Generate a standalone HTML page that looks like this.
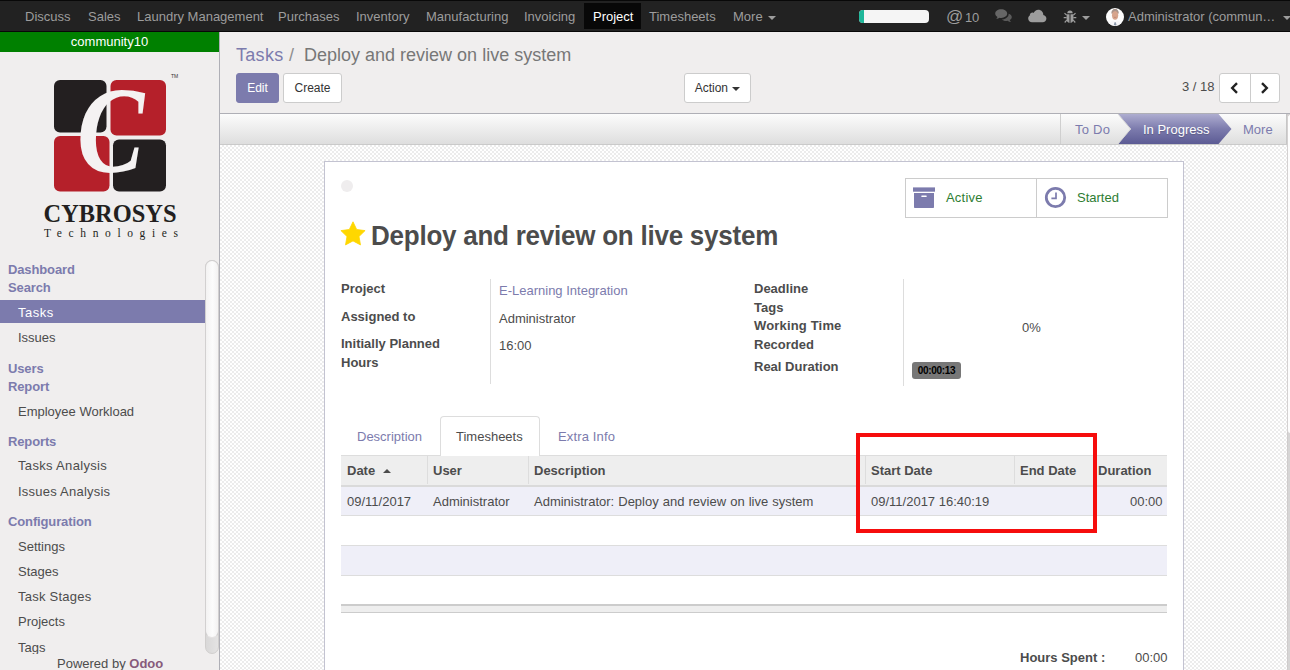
<!DOCTYPE html>
<html>
<head>
<meta charset="utf-8">
<title>Deploy and review on live system - Odoo</title>
<style>
*{box-sizing:border-box;margin:0;padding:0}
html,body{width:1290px;height:670px;overflow:hidden;background:#f0eeee;font-family:"Liberation Sans",sans-serif;font-size:13px;color:#4c4c4c}
body{position:relative}
.abs{position:absolute;white-space:nowrap}
/* navbar */
#nav{position:absolute;left:0;top:0;width:1290px;height:32px;background:#222222;border-top:1px solid #080808;border-bottom:1px solid #080808}
#nav .mi{position:absolute;top:0;height:30px;line-height:31px;color:#9d9d9d;font-size:13px;white-space:nowrap}
#nav .act{background:#080808;color:#fff;padding:0 9px}
.caret{display:inline-block;width:0;height:0;border-left:4px solid transparent;border-right:4px solid transparent;border-top:4px solid currentColor;vertical-align:middle;margin-left:4px}
/* sidebar */
#side{position:absolute;left:0;top:32px;width:220px;height:638px;background:#f0eeee;border-right:1px solid #afafb6}
#db{position:absolute;left:0;top:0;width:219px;height:20px;background:#008000;color:#fff;text-align:center;font-size:13px;line-height:19px}
.mh{position:absolute;left:8px;font-weight:bold;color:#7c7bad;font-size:13px;white-space:nowrap;letter-spacing:-0.13px}
.ml{position:absolute;left:18px;color:#4c4c4c;font-size:13px;white-space:nowrap}
#selrow{position:absolute;left:0;top:268px;width:205px;height:23px;background:#7c7bad}
/* control panel */
#cp{position:absolute;left:220px;top:32px;width:1070px;height:82px;background:#f0eeee;border-bottom:1px solid #afafb6}
.btn{position:absolute;height:29px;line-height:29px;border:1px solid #ccc;border-radius:3px;background:#fff;color:#333;font-size:12px;text-align:center;white-space:nowrap}
.btn.pri{background:#7c7bad;border-color:#7c7bad;color:#fff}
/* statusbar */
#sb{position:absolute;left:220px;top:114px;width:1067px;height:31px;background:linear-gradient(#fcfcfc,#dedede);border-bottom:1px solid #cacaca}
/* sheet bg */
#bg{position:absolute;left:220px;top:145px;width:1067px;height:525px;background-color:#fff;
background-image:conic-gradient(#ececec 25%,#fff 0 50%,#ececec 0 75%,#fff 0);background-size:4px 4px}
#sheet{position:absolute;left:324px;top:161px;width:860px;height:520px;background:#fff;border:1px solid #c3c3d1}
#sheet>*{margin-top:1px}
.lbl{position:absolute;font-weight:bold;color:#4c4c4c;font-size:13px;white-space:nowrap}
.val{position:absolute;color:#4c4c4c;font-size:13px;white-space:nowrap}
</style>
</head>
<body>
<div id="nav">
  <span class="mi" style="left:25px">Discuss</span>
  <span class="mi" style="left:88px">Sales</span>
  <span class="mi" style="left:137px">Laundry Management</span>
  <span class="mi" style="left:278px">Purchases</span>
  <span class="mi" style="left:356px">Inventory</span>
  <span class="mi" style="left:426px">Manufacturing</span>
  <span class="mi" style="left:524px">Invoicing</span>
  <div style="position:absolute;left:584px;top:2px;width:57px;height:26px;background:#080808"></div>
  <span class="mi" style="left:593px;color:#fff">Project</span>
  <span class="mi" style="left:649px">Timesheets</span>
  <span class="mi" style="left:733px">More <i class="caret" style="margin-left:2px"></i></span>
  <div style="position:absolute;left:859px;top:9px;width:70px;height:13px;border-radius:4px;background:#f5f5f5;overflow:hidden"><div style="width:5px;height:13px;background:#1fb79a"></div></div>
  <span class="mi" style="left:946px"><span style="font-size:17px;position:relative;top:0px;margin-right:-2px">@</span> 10</span>
  <svg style="position:absolute;left:995px;top:8px" width="17" height="14" viewBox="0 0 17 14"><path d="M6.2 0.3C2.8 0.3 0.2 2.2 0.2 4.6c0 1.4 0.9 2.6 2.3 3.4-0.2 0.8-0.7 1.5-1.3 2 1.3-0.1 2.5-0.6 3.4-1.3 0.5 0.1 1 0.2 1.6 0.2 3.4 0 6-1.9 6-4.3S9.600 0.300 6.200 0.300z" fill="#666"/><path d="M13.6 5.200c0 2.800-3 5.100-6.900 5.300 1 0.900 2.600 1.500 4.300 1.500 0.600 0 1.100-0.100 1.600-0.200 0.900 0.700 2.100 1.200 3.400 1.300-0.600-0.500-1.100-1.200-1.300-2 1.300-0.700 2.100-1.800 2.100-3 0-1.500-1.300-2.800-3.200-3.400z" fill="#5a5a5a"/></svg>
  <svg style="position:absolute;left:1028px;top:8px" width="19" height="14" viewBox="0 0 19 14"><path d="M15.300 6.100c0-0.100 0-0.300 0-0.400 0-2.700-2.200-5-5-5-2.100 0-3.900 1.300-4.600 3.200C5.300 3.700 4.900 3.600 4.500 3.600c-1.500 0-2.700 1.200-2.700 2.700 0 0.100 0 0.200 0 0.300C0.800 7.100 0.200 8.200 0.200 9.400c0 2.100 1.700 3.800 3.800 3.800h10.600c2.100 0 3.800-1.700 3.800-3.800 0-1.600-1.300-3-3.100-3.300z" fill="#9d9d9d"/></svg>
  <svg style="position:absolute;left:1063px;top:9px" width="14" height="14" viewBox="0 0 14 14"><g fill="#9d9d9d"><path d="M4.300 3.300a2.700 2.700 0 0 1 5.400 0z"/><path d="M3.600 4.300h2.900v8.600c-1.700-0.200-2.900-1.700-2.900-3.500z"/><path d="M7.500 4.300h2.900v5.100c0 1.800-1.200 3.300-2.900 3.500z"/></g><g stroke="#9d9d9d" stroke-width="1.200" fill="none"><path d="M0.700 7.600h2.900M10.400 7.600h2.900M3.600 5.200L1.500 3.100M10.400 5.200l2.100-2.100M3.800 10.200l-2.100 2.300M10.200 10.200l2.100 2.300"/></g></svg>
  <i class="caret" style="position:absolute;left:1082px;top:15px;margin:0;color:#9d9d9d"></i>
  <svg style="position:absolute;left:1106px;top:7px" width="18" height="18" viewBox="0 0 18 18"><defs><clipPath id="av"><circle cx="9" cy="9" r="9"/></clipPath></defs><g clip-path="url(#av)"><rect width="18" height="18" fill="#fcfcfc"/><path d="M5.300 5.600c0-3 1.600-4.600 3.800-4.600s3.700 1.600 3.700 4.600z" fill="#a8948a"/><ellipse cx="9.100" cy="7.300" rx="3.100" ry="4.400" fill="#d7a58d"/><path d="M6 5.600c0.400-1.900 1.600-2.600 3.100-2.600s2.600 0.700 3 2.600c0-3-1.200-4.500-3-4.500s-3.100 1.500-3.100 4.500z" fill="#a8958c"/><path d="M7.700 8.600c0.500 0.500 2.300 0.500 2.800 0l-0.300 1.500H8z" fill="#c48f79"/><path d="M3 18c0-3.200 2-4.900 4.300-5.500l1.800 1.300 1.800-1.300C13.200 13.100 15.200 14.800 15.200 18z" fill="#f6f6f8"/><path d="M8.500 14.200h1.300l0.500 2-1.150 1.800-1.150-1.800z" fill="#8d9aac"/></g></svg>
  <span class="mi" style="left:1128px">Administrator (commun&#8230;</span>
  <i class="caret" style="position:absolute;left:1283px;top:15px;margin:0;color:#9d9d9d"></i>
</div>
<div id="side">
  <div id="db">community10</div>
  <svg style="position:absolute;left:40px;top:36px" width="150" height="176" viewBox="40 68 150 176">
    <rect x="54" y="80" width="52.500" height="52.500" rx="6" fill="#231f20"/>
    <rect x="110.500" y="80" width="55.500" height="55.500" rx="6" fill="#b5202a"/>
    <rect x="54" y="136" width="55.500" height="55.500" rx="6" fill="#b5202a"/>
    <rect x="113" y="139.500" width="53" height="52" rx="6" fill="#231f20"/>
    <text x="0" y="0" transform="translate(76.900,171.600) scale(0.900,1.098)" font-family="Liberation Serif, serif" font-style="italic" font-weight="bold" font-size="112" fill="#f4f2f2">C</text>
    <text x="171" y="78" font-family="Liberation Sans, sans-serif" font-size="5" fill="#333">TM</text>
    <text x="43.500" y="221.500" font-family="Liberation Serif, serif" font-weight="bold" font-size="24.500" fill="#231f20" textLength="133" lengthAdjust="spacingAndGlyphs">CYBROSYS</text>
    <text x="44" y="237" font-family="Liberation Serif, serif" font-size="11.500" fill="#231f20" textLength="134" lengthAdjust="spacing">Technologies</text>
  </svg>
  <div class="mh" style="top:230px">Dashboard</div>
  <div class="mh" style="top:248px">Search</div>
  <div id="selrow"></div>
  <div class="ml" style="top:273px;color:#fff;letter-spacing:0.5px">Tasks</div>
  <div class="ml" style="top:298px">Issues</div>
  <div class="mh" style="top:329px">Users</div>
  <div class="mh" style="top:347px">Report</div>
  <div class="ml" style="top:372px">Employee Workload</div>
  <div class="mh" style="top:402px">Reports</div>
  <div class="ml" style="top:426px;letter-spacing:0.33px">Tasks Analysis</div>
  <div class="ml" style="top:452px;letter-spacing:0.23px">Issues Analysis</div>
  <div class="mh" style="top:482px">Configuration</div>
  <div class="ml" style="top:507px">Settings</div>
  <div class="ml" style="top:532px">Stages</div>
  <div class="ml" style="top:557px;letter-spacing:0.24px">Task Stages</div>
  <div class="ml" style="top:582px">Projects</div>
  <div class="ml" style="top:608px">Tags</div>
  <div style="position:absolute;left:0;top:622px;width:205px;height:16px;background:#f0eeee"></div>
  <div class="abs" style="left:57px;top:624px;font-size:13px;color:#4c4c4c">Powered by <b style="color:#875a7b">Odoo</b></div>
  <div style="position:absolute;left:205px;top:228px;width:14px;height:394px;border:1px solid #d0cecd;border-radius:7px;background:linear-gradient(90deg,#d9d8d8,#e4e3e3)"></div>
  <div style="position:absolute;left:205px;top:228px;width:14px;height:378px;border:1px solid #d2d0d0;border-bottom-color:#e6e4e4;border-radius:7px;background:linear-gradient(90deg,#f3f2f2,#fcfcfc 55%,#f3f2f2)"></div>
</div>
<div id="cp">
  <div class="abs" style="left:16px;top:13px;font-size:18px;color:#777"><span style="color:#7c7bad;letter-spacing:0.3px">Tasks</span><span style="color:#8f8f8f;margin-left:5.500px">/</span>&nbsp; Deploy and review on live system</div>
  <div class="btn pri" style="left:16px;top:41px;width:43px;height:30px">Edit</div>
  <div class="btn" style="left:63px;top:41px;width:59px;height:30px">Create</div>
  <div class="btn" style="left:464px;top:41px;width:67px;height:30px">Action <i class="caret" style="margin-left:1px"></i></div>
  <div class="abs" style="left:962px;top:47px;font-size:13px;color:#4c4c4c">3 / 18</div>
  <div class="btn" style="left:999px;top:41px;width:32px;height:30px;border-radius:3px 0 0 3px"><svg width="9" height="12" viewBox="0 0 9 12" style="position:absolute;left:10px;top:8px"><path d="M7 1.200L2.200 6 7 10.800" fill="none" stroke="#222" stroke-width="2.400"/></svg></div>
  <div class="btn" style="left:1030px;top:41px;width:30px;height:30px;border-radius:0 3px 3px 0"><svg width="9" height="12" viewBox="0 0 9 12" style="position:absolute;left:9px;top:8px"><path d="M2 1.200L6.800 6 2 10.800" fill="none" stroke="#222" stroke-width="2.400"/></svg></div>
</div>
<div id="sb">
  <div style="position:absolute;left:840px;top:0;width:1px;height:30px;background:#cfcfcf"></div>
  <svg style="position:absolute;left:841px;top:0" width="223" height="30" viewBox="0 0 223 30">
    <defs><linearGradient id="pg" x1="0" y1="0" x2="0" y2="1"><stop offset="0" stop-color="#aeadd0"/><stop offset="0.500" stop-color="#7c7bad"/><stop offset="1" stop-color="#5c5b94"/></linearGradient>
    <linearGradient id="gg" x1="0" y1="0" x2="0" y2="1"><stop offset="0" stop-color="#fcfcfc"/><stop offset="1" stop-color="#dedede"/></linearGradient></defs>
    <path d="M57 0H157.500L170.500 15 157.500 30H57L70 15z" fill="url(#pg)"/>
    <path d="M57 0L69.500 15 57 30" fill="none" stroke="#d4d4d4" stroke-width="1"/>
  </svg>
  <div class="abs" style="left:855px;top:8px;font-size:13px;color:#7c7bad;letter-spacing:0.25px">To Do</div>
  <div class="abs" style="left:923px;top:8px;font-size:13px;color:#fff;text-shadow:0 1px 1px rgba(0,0,0,.2)">In Progress</div>
  <div class="abs" style="left:1023px;top:8px;font-size:13px;color:#7c7bad">More</div>
</div>
<div id="bg"></div>
<div id="sheet">
  <div style="position:absolute;left:16px;top:17px;width:12px;height:12px;border-radius:50%;background:#efedee"></div>
  <!-- button box -->
  <div style="position:absolute;left:580px;top:15px;width:263px;height:40px;border:1px solid #ccc"></div>
  <div style="position:absolute;left:711px;top:15px;width:1px;height:40px;background:#ccc"></div>
  <svg style="position:absolute;left:588px;top:24px" width="23" height="22" viewBox="0 0 23 22"><rect x="0" y="0.400" width="22" height="4.300" fill="#7c7bad"/><path d="M1 6h20v14.300a0.800 0.800 0 0 1-0.800 0.800H1.800a0.800 0.800 0 0 1-0.800-0.800z" fill="#7c7bad"/><rect x="8.200" y="8.400" width="5.600" height="1.700" rx="0.800" fill="#fff"/></svg>
  <div class="abs" style="left:621px;top:27px;font-size:13px;color:#2e7d32;letter-spacing:0.2px">Active</div>
  <svg style="position:absolute;left:719px;top:23px" width="23" height="23" viewBox="0 0 23 23"><circle cx="11.500" cy="11.500" r="9.200" fill="none" stroke="#7c7bad" stroke-width="2.800"/><path d="M12 6.500v5.800H7.400" fill="none" stroke="#7c7bad" stroke-width="1.700"/></svg>
  <div class="abs" style="left:752px;top:27px;font-size:13px;color:#2e7d32">Started</div>
  <!-- title -->
  <svg style="position:absolute;left:15px;top:58px" width="26" height="25" viewBox="0 0 26 25"><path d="M13 0.800l3.700 7.700 8.400 1.100-6.100 5.900 1.500 8.400L13 19.900l-7.500 4 1.500-8.400-6.100-5.900 8.400-1.100z" fill="#ffd700" stroke="#ffd700" stroke-width="0.800" stroke-linejoin="round"/></svg>
  <div class="abs" style="left:46px;top:58px;font-size:26px;font-weight:bold;color:#4c4c4c;line-height:30px;letter-spacing:-0.24px;transform:scaleY(1.04);transform-origin:0 24px">Deploy and review on live system</div>
  <!-- left group -->
  <div class="lbl" style="left:16px;top:118px">Project</div>
  <div class="lbl" style="left:16px;top:146px">Assigned to</div>
  <div class="lbl" style="left:16px;top:173px">Initially Planned</div>
  <div class="lbl" style="left:16px;top:192px">Hours</div>
  <div style="position:absolute;left:165px;top:116px;width:1px;height:105px;background:#ddd"></div>
  <div class="val" style="left:174px;top:120px;color:#7c7bad">E-Learning Integration</div>
  <div class="val" style="left:174px;top:148px">Administrator</div>
  <div class="val" style="left:174px;top:175px">16:00</div>
  <!-- right group -->
  <div class="lbl" style="left:429px;top:118px">Deadline</div>
  <div class="lbl" style="left:429px;top:137px">Tags</div>
  <div class="lbl" style="left:429px;top:155px;letter-spacing:0.17px">Working Time</div>
  <div class="lbl" style="left:429px;top:174px">Recorded</div>
  <div class="lbl" style="left:429px;top:196px">Real Duration</div>
  <div style="position:absolute;left:578px;top:116px;width:1px;height:107px;background:#ddd"></div>
  <div class="val" style="left:697px;top:157px">0%</div>
  <div class="abs" style="left:587px;top:199px;width:49px;height:17px;border-radius:3px;background:#777;color:#000;font-weight:bold;font-size:10px;line-height:17px;text-align:center;letter-spacing:-0.300px">00:00:13</div>
  <!-- tabs -->
  <div style="position:absolute;left:16px;top:292px;width:826px;height:1px;background:#ddd"></div>
  <div class="abs" style="left:32px;top:266px;color:#7c7bad">Description</div>
  <div style="position:absolute;left:115px;top:253px;width:100px;height:40px;border:1px solid #ddd;border-bottom:none;border-radius:4px 4px 0 0;background:#fff"></div>
  <div class="abs" style="left:131px;top:266px;color:#4c4c4c">Timesheets</div>
  <div class="abs" style="left:233px;top:266px;color:#7c7bad;letter-spacing:0.15px">Extra Info</div>
  <!-- table -->
  <div style="position:absolute;left:16px;top:293px;width:826px;height:31px;background:#eee;border-bottom:2px solid #dadada"></div>
  <div style="position:absolute;left:102px;top:293px;width:1px;height:28px;background:#ddd"></div>
  <div style="position:absolute;left:203px;top:293px;width:1px;height:28px;background:#ddd"></div>
  <div style="position:absolute;left:540px;top:293px;width:1px;height:28px;background:#ddd"></div>
  <div style="position:absolute;left:689px;top:293px;width:1px;height:28px;background:#ddd"></div>
  <div style="position:absolute;left:768px;top:293px;width:1px;height:28px;background:#ddd"></div>
  <div class="lbl" style="left:22px;top:300px">Date</div>
  <div style="position:absolute;left:58px;top:306px;width:0;height:0;border-left:4.500px solid transparent;border-right:4.500px solid transparent;border-bottom:4.500px solid #4c4c4c"></div>
  <div class="lbl" style="left:108px;top:300px">User</div>
  <div class="lbl" style="left:209px;top:300px">Description</div>
  <div class="lbl" style="left:546px;top:300px">Start Date</div>
  <div class="lbl" style="left:695px;top:300px">End Date</div>
  <div class="lbl" style="left:773px;top:300px">Duration</div>
  <div style="position:absolute;left:16px;top:324px;width:826px;height:29px;background:#efeff8;border-bottom:1px solid #ddd"></div>
  <div class="val" style="left:22px;top:331px">09/11/2017</div>
  <div class="val" style="left:108px;top:331px">Administrator</div>
  <div class="val" style="left:209px;top:331px;word-spacing:0.45px">Administrator: Deploy and review on live system</div>
  <div class="val" style="left:546px;top:331px">09/11/2017 16:40:19</div>
  <div class="val" style="left:805px;top:331px">00:00</div>
  <div style="position:absolute;left:16px;top:382px;width:826px;height:31px;background:#efeff8;border-top:1px solid #ddd;border-bottom:1px solid #ddd"></div>
  <div style="position:absolute;left:16px;top:441px;width:826px;height:9px;background:#eee;border-top:2px solid #ccc;border-bottom:1px solid #ccc"></div>
  <div class="lbl" style="left:695px;top:487px">Hours Spent :</div>
  <div class="val" style="left:810px;top:487px">00:00</div>
  <!-- red highlight -->
  <div style="position:absolute;left:531px;top:270px;width:241px;height:100px;border:4px solid #f60d0d"></div>
</div>
<!-- scrollbar -->
<div style="position:absolute;left:1286px;top:114px;width:1px;height:30px;background:#c6c6c6"></div>
<div style="position:absolute;left:1287px;top:114px;width:3px;height:556px;background:#d6d5d5;border-left:1px solid #cfcccc"></div>
<div style="position:absolute;left:1287px;top:114px;width:6px;height:319px;background:#fdfdfd;border-left:1px solid #d4d1d1;border-top:1px solid #d4d1d1;border-radius:3px 0 0 3px"></div>
</body>
</html>
